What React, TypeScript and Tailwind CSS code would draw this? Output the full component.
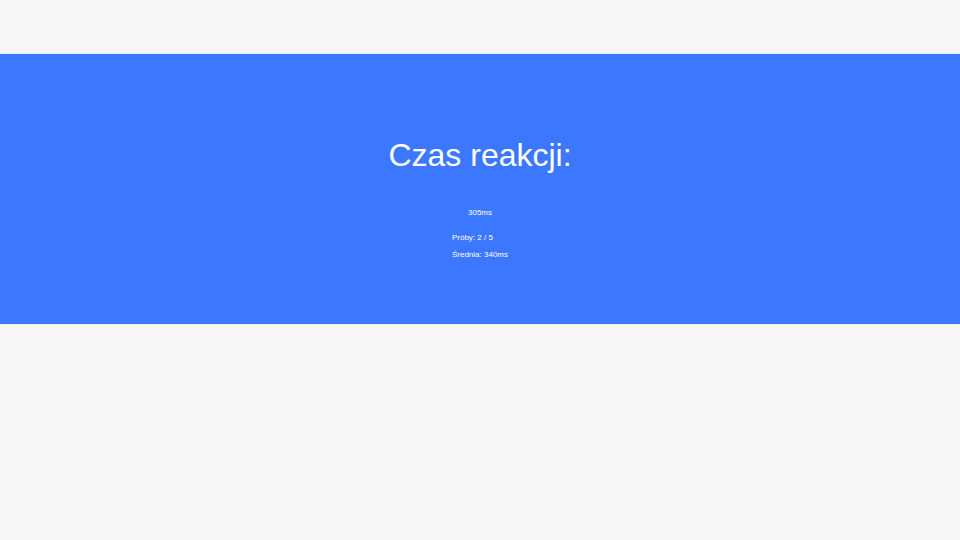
import React from "react";

type Stat = {
  label: string;
  value: string;
};

const stats: Array<Stat> = [
  { label: "Próby", value: "2 / 5" },
  { label: "Średnia", value: "340ms" },
];

const App: React.FC = () => {
  return (
    <div className="min-h-[540px] w-full bg-[#f6f6f6] pt-[54px] font-['Liberation_Sans',Arial,sans-serif]">
      <section className="flex h-[270px] flex-col items-center bg-[#3b78ff] pt-[135px] text-white shadow-[0_0_1px_rgba(0,0,0,0.3)]">
        <h1 className="-mt-[52px] text-[32px] leading-[37px]">Czas reakcji:</h1>
        <div className="mt-[34px] text-[8px] leading-[9px]">305ms</div>
        <div className="mt-[16px] flex flex-col gap-[8px] text-[8px] leading-[9px]">
          {stats.map((item, index) => (
            <div key={index}>
              {item.label}: {item.value}
            </div>
          ))}
        </div>
      </section>
    </div>
  );
};

export default App;
